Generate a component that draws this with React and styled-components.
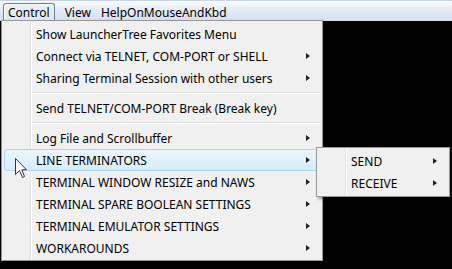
import React from 'react';
import styled, { createGlobalStyle } from 'styled-components';

const GlobalStyle = createGlobalStyle`
  html, body {
    margin: 0;
    padding: 0;
    background: #000;
  }
`;

const Screen = styled.div`
  position: relative;
  width: 452px;
  height: 269px;
  overflow: hidden;
  background: #000;
  font-family: 'Noto Sans', 'Open Sans', sans-serif;
  font-size: 12px;
  color: #000;
`;

const MenuBar = styled.div`
  display: flex;
  align-items: stretch;
  height: 21px;
  padding: 3px 0 0 3px;
  box-sizing: border-box;
  background: linear-gradient(#c8d6ec 0, #c8d6ec 1px, #f7f9fd 1px, #eef2fa 6px, #dde5f4 14px, #d8e0f1 100%);
`;

const BarItem = styled.div`
  display: flex;
  align-items: center;
  padding: 0 4px;
  margin-right: ${p => (p.$active ? 5 : 0)}px;
  border: ${p => (p.$active ? '1px solid #6f7c90' : '1px solid transparent')};
  border-bottom: none;
  border-radius: 3px 3px 0 0;
  background: ${p => (p.$active ? 'linear-gradient(#eef2f8, #dfe5ef)' : 'transparent')};
  box-shadow: ${p => (p.$active ? 'inset 1px 1px 0 #fafbfd' : 'none')};
  white-space: nowrap;
`;

const Popup = styled.div`
  position: absolute;
  left: ${p => p.$x}px;
  top: ${p => p.$y}px;
  width: ${p => p.$w}px;
  box-sizing: border-box;
  padding: 2px 2px ${p => p.$pb}px 2px;
  border: 1px solid #979797;
  background:
    linear-gradient(to right, transparent 28px, #e2e3e3 28px, #e2e3e3 29px, #ffffff 29px, #ffffff 30px, transparent 30px),
    #f0f0f0;
  box-shadow: 2px 2px 3px rgba(0, 0, 0, 0.35);
`;

const Item = styled.div`
  display: flex;
  align-items: center;
  height: 22px;
  box-sizing: border-box;
  padding: 0 9px 0 31px;
  border: 1px solid ${p => (p.$hot ? '#a9d8ee' : 'transparent')};
  border-radius: 3px;
  background: ${p => (p.$hot ? 'linear-gradient(#eaf5fc, #d8ecf8)' : 'transparent')};
  white-space: nowrap;
`;

const Label = styled.span`
  flex: 1;
  padding-top: 1px;
`;

const Arrow = styled.span`
  width: 0;
  height: 0;
  border-top: 3.5px solid transparent;
  border-bottom: 3.5px solid transparent;
  border-left: 4px solid #222;
`;

const Separator = styled.div`
  height: 8px;
  margin-left: 28px;
  display: flex;
  flex-direction: column;
  justify-content: center;
  &::before {
    content: '';
    display: block;
    height: 1px;
    background: #e0e0e0;
  }
  &::after {
    content: '';
    display: block;
    height: 1px;
    background: #ffffff;
  }
`;

const Cursor = styled.svg`
  position: absolute;
  left: 15px;
  top: 158px;
`;

const mainItems = [
  { label: 'Show LauncherTree Favorites Menu' },
  { label: 'Connect via TELNET, COM-PORT or SHELL', sub: true },
  { label: 'Sharing Terminal Session with other users', sub: true },
  { sep: true },
  { label: 'Send TELNET/COM-PORT Break (Break key)' },
  { sep: true },
  { label: 'Log File and Scrollbuffer', sub: true },
  { label: 'LINE TERMINATORS', sub: true, hot: true },
  { label: 'TERMINAL WINDOW RESIZE and NAWS', sub: true },
  { label: 'TERMINAL SPARE BOOLEAN SETTINGS', sub: true },
  { label: 'TERMINAL EMULATOR SETTINGS', sub: true },
  { label: 'WORKAROUNDS', sub: true },
];

const subItems = ['SEND', 'RECEIVE'];

export default function App() {
  return (
    <Screen>
      <GlobalStyle />
      <MenuBar>
        <BarItem $active>Control</BarItem>
        <BarItem>View</BarItem>
        <BarItem>HelpOnMouseAndKbd</BarItem>
      </MenuBar>

      <Popup $x={1} $y={20} $w={322} $pb={1}>
        {mainItems.map((it, i) =>
          it.sep ? (
            <Separator key={i} />
          ) : (
            <Item key={i} $hot={it.hot}>
              <Label>{it.label}</Label>
              {it.sub && <Arrow />}
            </Item>
          )
        )}
      </Popup>

      <Popup $x={316} $y={147} $w={134} $pb={2}>
        {subItems.map(s => (
          <Item key={s}>
            <Label>{s}</Label>
            <Arrow />
          </Item>
        ))}
      </Popup>

      <Cursor width="13" height="21" viewBox="0 0 13 21">
        <path
          d="M0.5 0.5 L0.5 16.5 L4.5 12.5 L7.5 19.5 L9.5 18.5 L6.8 11.8 L11.5 11.8 Z"
          fill="#ffffff"
          stroke="#333"
          strokeWidth="1"
          strokeLinejoin="miter"
        />
      </Cursor>
    </Screen>
  );
}
